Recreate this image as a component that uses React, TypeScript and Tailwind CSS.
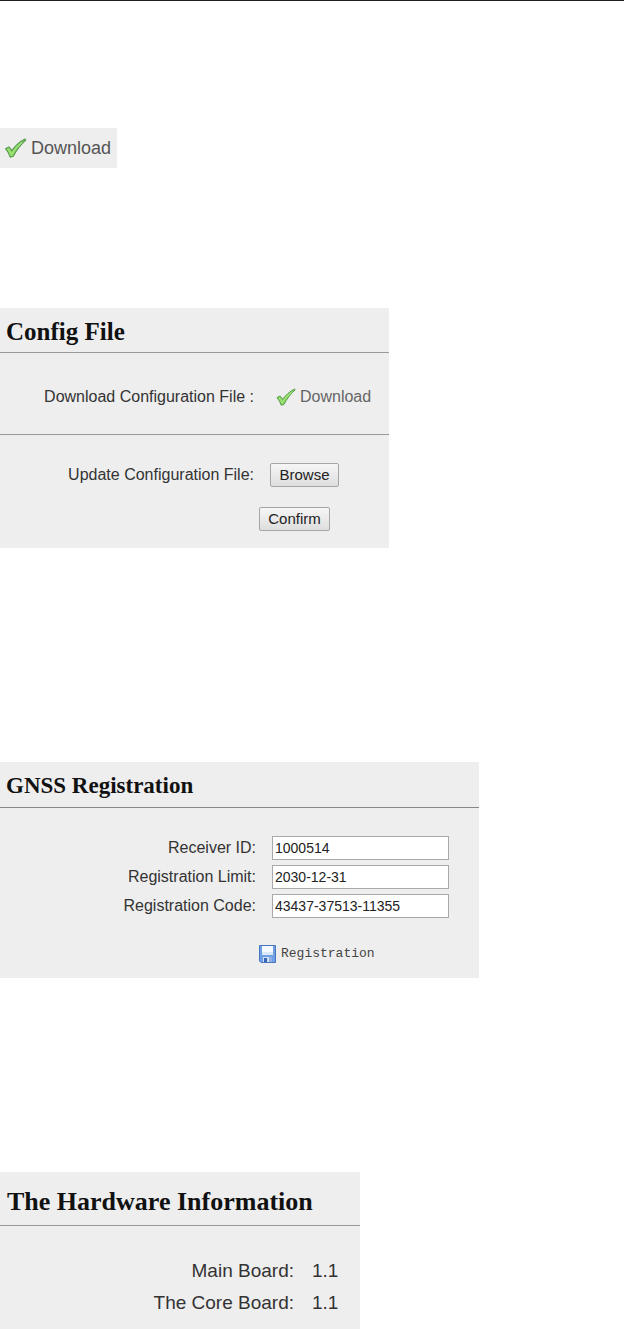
import { useState } from 'react';

interface Field {
  id: string;
  label: string;
  value: string;
}

const registrationFields: Field[] = [
  { id: 'receiver-id', label: 'Receiver ID:', value: '1000514' },
  { id: 'registration-limit', label: 'Registration Limit:', value: '2030-12-31' },
  { id: 'registration-code', label: 'Registration Code:', value: '43437-37513-11355' },
];

const boards = [
  { name: 'Main Board:', version: '1.1' },
  { name: 'The Core Board:', version: '1.1' },
];

const buttonClass =
  'h-6 border border-[#a6a6a6] rounded-xs bg-linear-to-b from-[#f6f6f6] to-[#dedede] text-[15px] leading-5 text-[#222] flex items-center justify-center';

function CheckIcon({ className }: { className?: string }) {
  return (
    <svg viewBox="0 0 20 18" className={className} aria-hidden="true">
      <path
        d="M1 9.6 4 8C5.2 9 5.9 10 6.6 11.4 9.8 7.2 13.6 3.4 18.6 1L19.2 1.8C14.6 6 10.8 10.8 8 16.4L5.2 17.2C4.2 14.2 2.9 11.8 1 9.6Z"
        fill="#86d65c"
        stroke="#5a9a52"
        strokeWidth="1"
        strokeLinejoin="round"
      />
      <path d="M3 9.8C4.4 11.2 5.4 12.8 6.3 14.8 9.2 10 12.4 6.6 16 3.8" fill="none" stroke="#a5e67e" strokeWidth="1.2" />
    </svg>
  );
}

function SaveIcon() {
  return (
    <svg viewBox="0 0 17 18" className="w-[17px] h-[18px] shrink-0" aria-hidden="true">
      <path d="M.5.5H16.5V17.5H2L.5 16Z" fill="#6f9fe4" stroke="#4a78c0" />
      <rect x="3" y="1" width="11" height="9" fill="#f4f9fd" />
      <path d="M3 7H14V10H3Z" fill="#d9eaf6" />
      <rect x="4" y="12" width="9" height="5" fill="#d3dff0" />
      <rect x="5" y="13" width="3" height="4" fill="#3565b4" />
      <path d="M10 12H13V17H10Z" fill="#8fb0e0" />
    </svg>
  );
}

export default function App() {
  const [values, setValues] = useState(registrationFields.map(f => f.value));

  return (
    <main className="border-t border-[#231f20] bg-white pt-[127px] font-['Liberation_Sans',Arial,sans-serif] text-[#333]">
      {/* Download */}
      <div className="w-fit h-10 bg-[#eee] pl-1 pr-[6px] flex items-center">
        <a href="#download" className="flex items-center gap-1 text-lg text-[#555]">
          <CheckIcon className="w-[23px] h-5" />
          Download
        </a>
      </div>

      {/* Config File */}
      <section className="mt-[140px] w-full max-w-[389px] bg-[#eee] pb-[17px]">
        <h2 className="h-[45px] pl-[6px] pt-2 font-['Liberation_Serif',serif] font-bold text-[25px] leading-8 text-[#111] border-b border-[#999]">
          Config File
        </h2>
        <div className="h-[82px] flex items-center border-b border-[#999] pt-[6px]">
          <span className="w-[254px] text-right">Download Configuration File :</span>
          <a href="#config" className="ml-[22px] flex items-center gap-1 text-[#666]">
            <CheckIcon className="w-5 h-[18px]" />
            Download
          </a>
        </div>
        <div className="pt-7 flex items-center">
          <span className="w-[254px] text-right">Update Configuration File:</span>
          <button type="button" className={`ml-4 w-[69px] ${buttonClass}`}>Browse</button>
        </div>
        <button type="button" className={`mt-5 ml-[259px] w-[71px] ${buttonClass}`}>Confirm</button>
      </section>

      {/* GNSS Registration */}
      <section className="mt-[214px] w-full max-w-[479px] bg-[#eee] pb-3">
        <h2 className="h-[46px] pl-[6px] pt-2 font-['Liberation_Serif',serif] font-bold text-[23px] leading-8 text-[#111] border-b border-[#888]">
          GNSS Registration
        </h2>
        <div className="pt-7 flex flex-col gap-[5px]">
          {registrationFields.map((field, i) => (
            <div key={field.id} className="flex items-center">
              <label htmlFor={field.id} className="w-[256px] text-right">{field.label}</label>
              <input
                id={field.id}
                type="text"
                value={values[i]}
                onChange={e => setValues(values.map((v, n) => (n === i ? e.target.value : v)))}
                className="ml-4 w-[177px] h-6 px-[2px] bg-white border border-[#a9a9a9] text-sm text-[#222]"
              />
            </div>
          ))}
        </div>
        <button type="button" className="mt-6 ml-[259px] h-6 flex items-center gap-[5px] font-['Liberation_Mono',monospace] text-[13px] text-[#444]">
          <SaveIcon />
          Registration
        </button>
      </section>

      {/* Hardware */}
      <section className="mt-[194px] w-full max-w-[360px] bg-[#eee] pb-[10px]">
        <h2 className="h-[54px] pl-[7px] pt-3 font-['Liberation_Serif',serif] font-bold text-[26px] leading-9 text-[#111] border-b border-[#999]">
          The Hardware Information
        </h2>
        <table className="mt-[29px] text-[19px] leading-8">
          <tbody>
            {boards.map(board => (
              <tr key={board.name}>
                <th scope="row" className="w-[294px] p-0 text-right font-normal">{board.name}</th>
                <td className="p-0 pl-[18px]">{board.version}</td>
              </tr>
            ))}
          </tbody>
        </table>
      </section>
    </main>
  );
}
